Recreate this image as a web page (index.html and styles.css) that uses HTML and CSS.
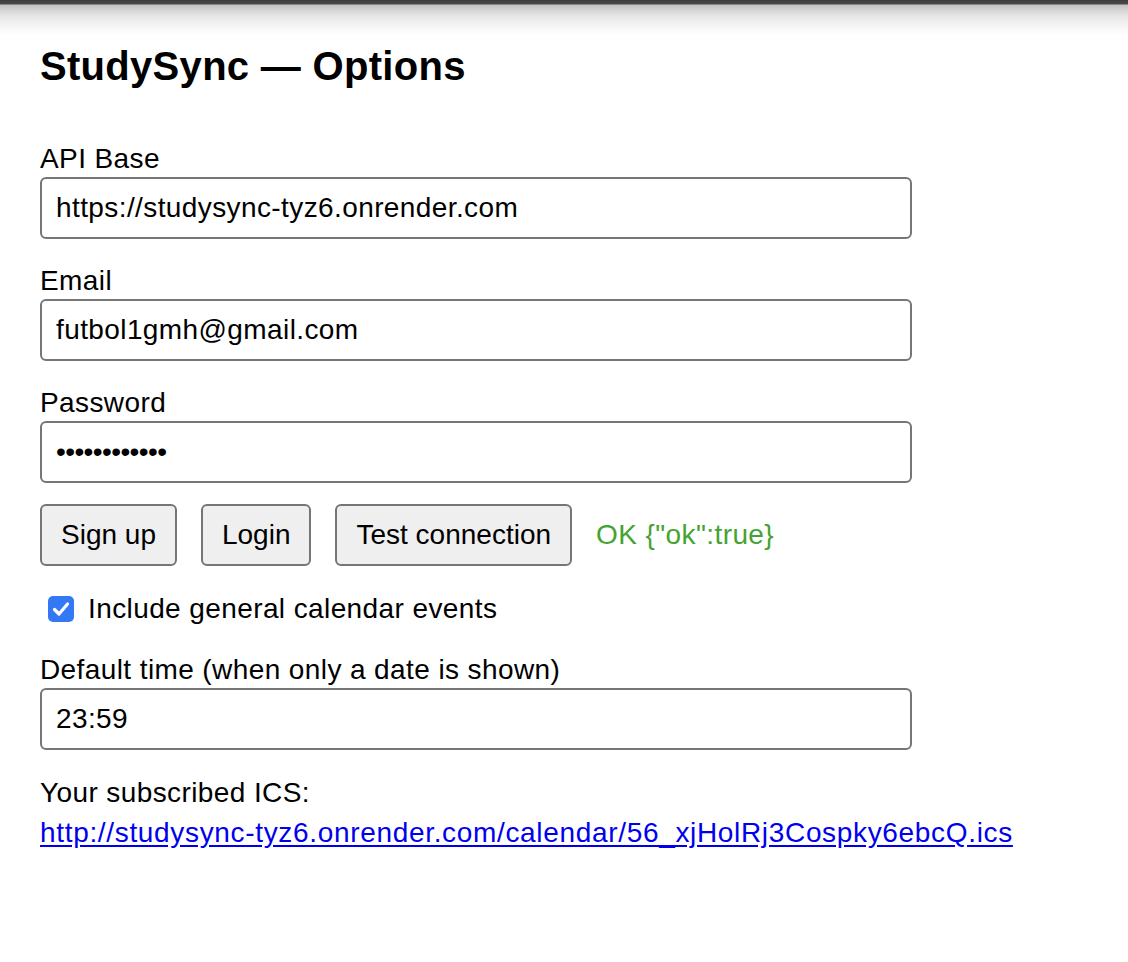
FILE: index.html
```html
<!DOCTYPE html>
<html lang="en">
<head>
<meta charset="utf-8">
<title>StudySync — Options</title>
<link rel="stylesheet" href="styles.css">
</head>
<body>
<div class="topbar"></div>
<main class="page">
  <h1 class="title">StudySync — Options</h1>

  <div class="field">
    <label class="label" for="api">API Base</label>
    <input class="input" id="api" type="text" value="https://studysync-tyz6.onrender.com">
  </div>

  <div class="field">
    <label class="label" for="email">Email</label>
    <input class="input" id="email" type="text" value="futbol1gmh@gmail.com">
  </div>

  <div class="field">
    <label class="label" for="pw">Password</label>
    <input class="input" id="pw" type="password" value="abcdefghijkl">
  </div>

  <div class="actions">
    <button class="btn" type="button">Sign up</button>
    <button class="btn" type="button">Login</button>
    <button class="btn" type="button">Test connection</button>
    <span class="status">OK {"ok":true}</span>
  </div>

  <label class="check-row">
    <span class="checkbox">
      <svg viewBox="0 0 26 26" width="26" height="26" aria-hidden="true">
        <path d="M6.5 13.5 L11 18 L19.5 8" fill="none" stroke="#fff" stroke-width="3.2" stroke-linecap="round" stroke-linejoin="round"/>
      </svg>
    </span>
    <span class="check-text">Include general calendar events</span>
  </label>

  <div class="field field-last">
    <label class="label" for="time">Default time (when only a date is shown)</label>
    <input class="input" id="time" type="text" value="23:59">
  </div>

  <div class="ics">
    <div class="ics-label">Your subscribed ICS:</div>
    <a class="ics-link" href="#">http://studysync-tyz6.onrender.com/calendar/56_xjHolRj3Cospky6ebcQ.ics</a>
  </div>
</main>
</body>
</html>
```

FILE: styles.css
```css
html, body {
  margin: 0;
  padding: 0;
  background: #fff;
}

body {
  font-family: "Liberation Sans", Arial, Helvetica, sans-serif;
  font-size: 28px;
  line-height: 32px;
  letter-spacing: 0.4px;
  color: #000;
}

.topbar {
  height: 36px;
  background: linear-gradient(to bottom,
    #3f3f3f 0px, #4a4a4a 4px, #c4c4c4 5px, #e6e6e6 16px, #f8f8f8 28px, #ffffff 36px);
}

.page {
  padding: 6px 40px 40px 40px;
}

.title {
  margin: 0 0 51px 0;
  font-size: 40px;
  line-height: 48px;
  font-weight: bold;
  letter-spacing: 0.3px;
}

.field {
  display: flex;
  flex-direction: column;
  gap: 2px;
  margin-bottom: 24px;
}

.field-last {
  margin-bottom: 27px;
}

.label {
  display: block;
  padding-top: 2px;
}

.input {
  box-sizing: border-box;
  height: 62px;
  width: 872px;
  margin: 0;
  padding: 0 14px;
  border: 2px solid #767676;
  border-radius: 6px;
  font-family: inherit;
  font-size: 28px;
  letter-spacing: 0.4px;
  color: #000;
  background: #fff;
}

.input[type="password"] {
  letter-spacing: -0.6px;
}

.actions {
  display: flex;
  align-items: center;
  gap: 24px;
  margin-top: -3px;
}

.btn {
  box-sizing: border-box;
  height: 62px;
  padding: 0 19px;
  border: 2px solid #767676;
  border-radius: 6px;
  background: #efefef;
  font-family: inherit;
  font-size: 28px;
  letter-spacing: 0;
  color: #000;
}

.status {
  color: #45a332;
}

.check-row {
  display: flex;
  align-items: center;
  gap: 14px;
  margin: 27px 0 27px 8px;
}

.checkbox {
  display: block;
  width: 26px;
  height: 26px;
  border-radius: 5px;
  background: #3478f6;
}

.checkbox svg {
  display: block;
}

.ics-link {
  display: inline-block;
  margin-top: 8px;
  color: #0000ee;
  white-space: nowrap;
  letter-spacing: 0.67px;
  text-decoration: underline;
  text-underline-offset: 3px;
}
```
